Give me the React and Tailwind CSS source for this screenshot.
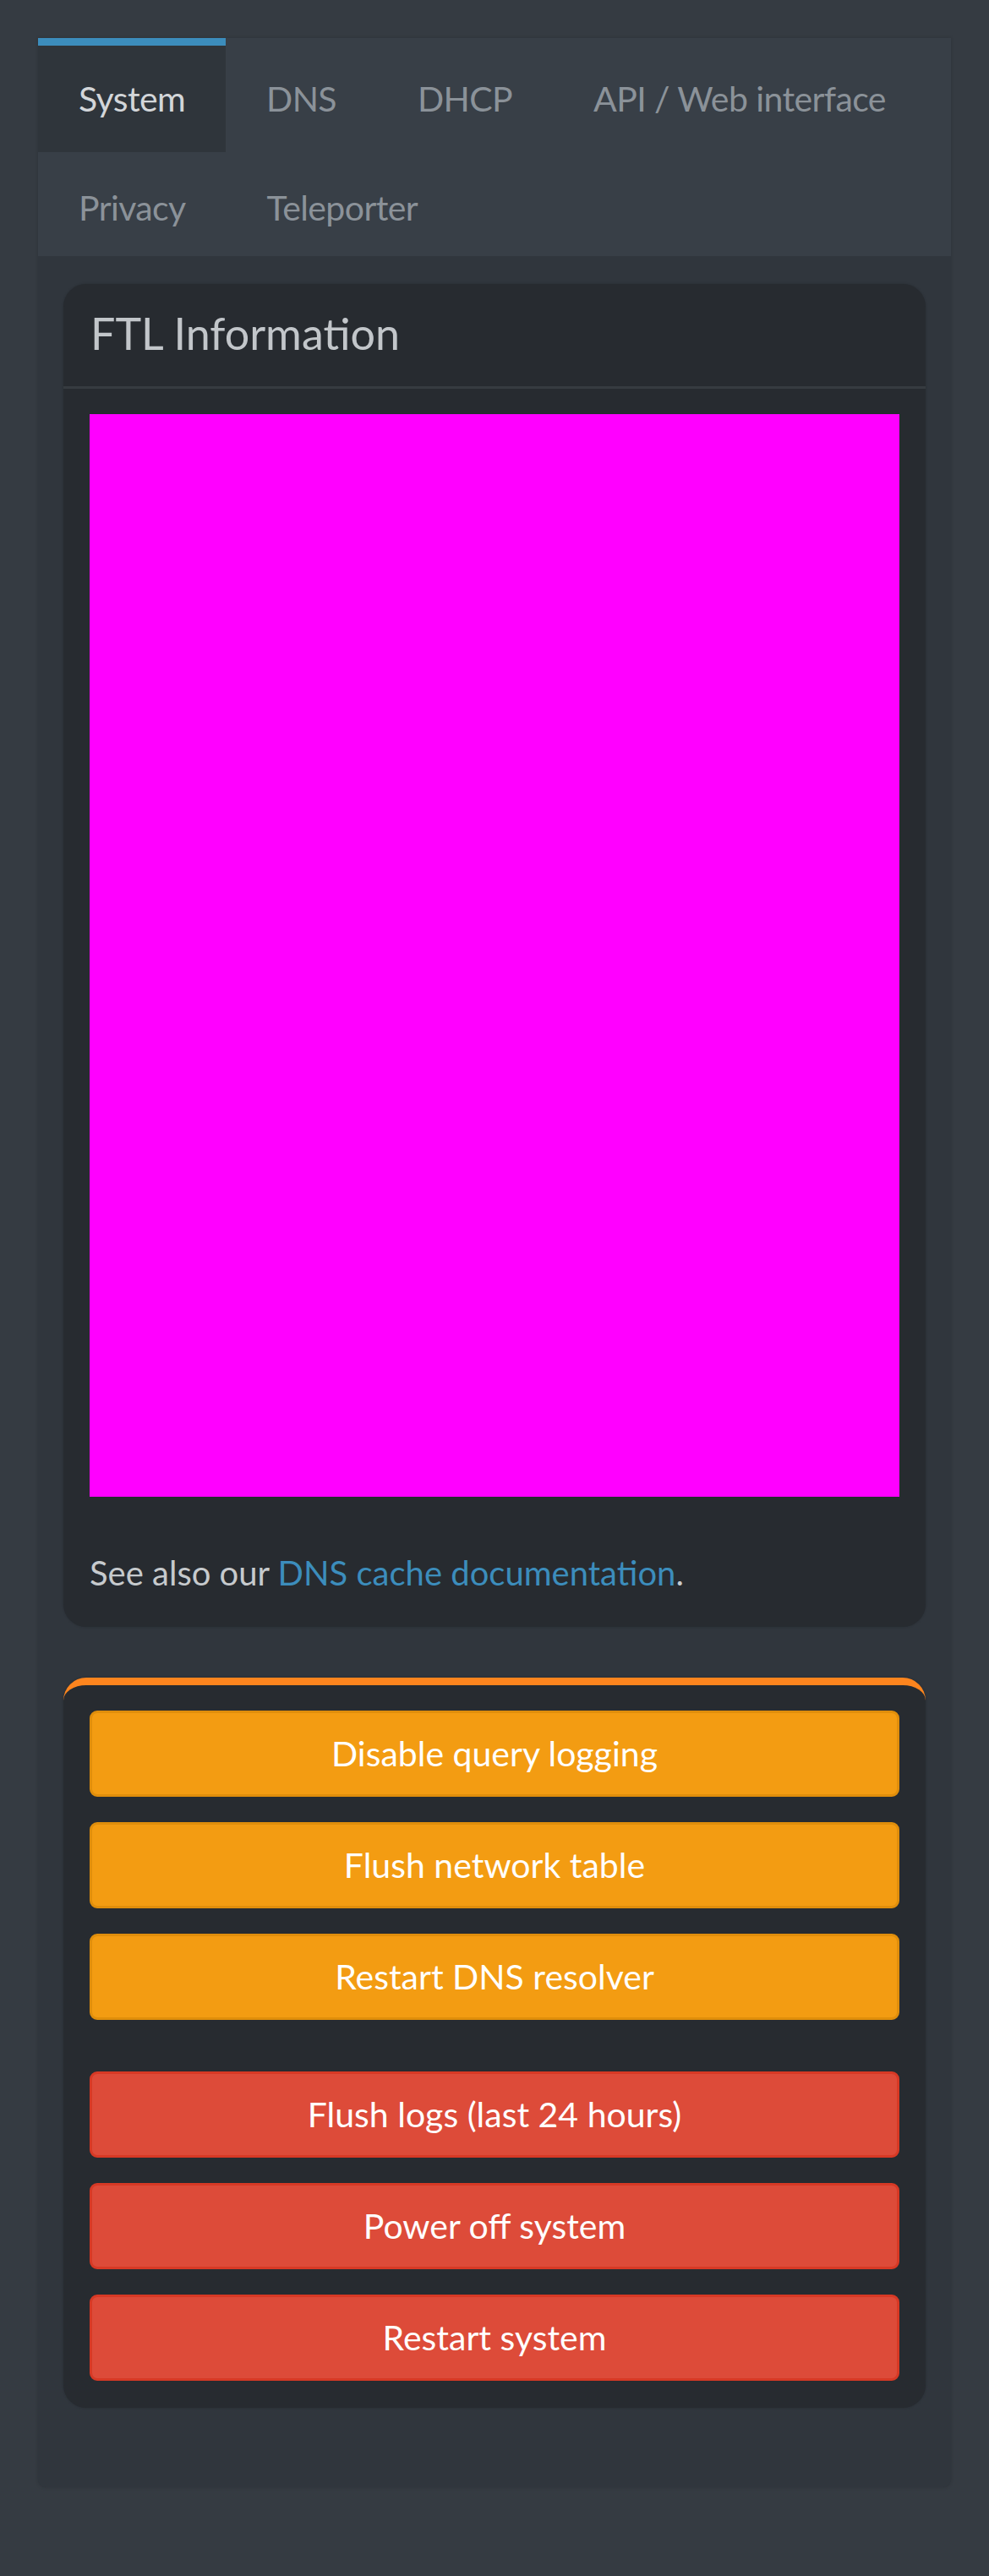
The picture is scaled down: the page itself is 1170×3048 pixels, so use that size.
import { useState } from 'react';

const tabs = ['System', 'DNS', 'DHCP', 'API / Web interface', 'Privacy', 'Teleporter'];

const warningActions = ['Disable query logging', 'Flush network table', 'Restart DNS resolver'];
const dangerActions = ['Flush logs (last 24 hours)', 'Power off system', 'Restart system'];

const ActionButton = ({ label, variant }) => {
  const colors =
    variant === 'danger'
      ? 'bg-[#dd4b39] border-[#d73925]'
      : 'bg-[#f39c12] border-[#e08e0b]';
  return (
    <button
      type="button"
      className={`${colors} w-full h-[102px] rounded-[9px] border-[3px] text-white text-[41px] flex items-center justify-center`}
    >
      {label}
    </button>
  );
};

const App = () => {
  const [activeTab, setActiveTab] = useState('System');

  return (
    <div
      className="min-h-screen bg-[#353b42] px-[45px] pt-[45px] pb-[103px]"
      style={{ fontFamily: 'Lato, "Open Sans", sans-serif' }}
    >
      <div className="bg-[#30363d] rounded-b-[9px] shadow-[0_0_4px_rgba(0,0,0,0.15)]">
        {/* Tabs */}
        <ul className="flex flex-wrap bg-[#383f47]">
          {tabs.map((tab) => (
            <li key={tab} className="mb-[-6px]">
              <button
                type="button"
                onClick={() => setActiveTab(tab)}
                className={`h-[135px] px-[48px] border-t-[9px] text-[41px] tracking-[-0.6px] flex items-center ${
                  activeTab === tab
                    ? 'border-[#3c8dbc] bg-[#2f353b] text-[#d3d6d9]'
                    : 'border-transparent text-[#8b9299]'
                }`}
              >
                {tab}
              </button>
            </li>
          ))}
        </ul>

        <div className="px-[30px] pt-[33px] pb-[94px]">
          {/* FTL Information */}
          <div className="bg-[#272b30] rounded-[27px] shadow-[0_0_3px_rgba(0,0,0,0.2)]">
            <div className="h-[124px] px-[32px] pb-[6px] flex items-center border-b-[3px] border-[#363b40]">
              <h3 className="text-[52px] text-[#c2c6ca] leading-none">FTL Information</h3>
            </div>
            <div className="px-[31px] pt-[30px] pb-[34px]">
              <div className="h-[1281px] bg-[#ff00ff]"></div>
              <p className="mt-[60px] text-[40px] leading-[60px] text-[#c6cacd]">
                See also our{' '}
                <a href="#" className="text-[#3c8dbc]">
                  DNS cache documentation
                </a>
                .
              </p>
            </div>
          </div>

          {/* Actions */}
          <div className="mt-[60px] bg-[#272b30] rounded-[27px] border-t-[9px] border-[#fd851e] shadow-[0_0_3px_rgba(0,0,0,0.2)]">
            <div className="px-[31px] pt-[30px] pb-[32px]">
              <div className="flex flex-col gap-[30px]">
                {warningActions.map((label) => (
                  <ActionButton key={label} label={label} variant="warning" />
                ))}
              </div>
              <div className="mt-[61px] flex flex-col gap-[30px]">
                {dangerActions.map((label) => (
                  <ActionButton key={label} label={label} variant="danger" />
                ))}
              </div>
            </div>
          </div>
        </div>
      </div>
    </div>
  );
};

export default App;
